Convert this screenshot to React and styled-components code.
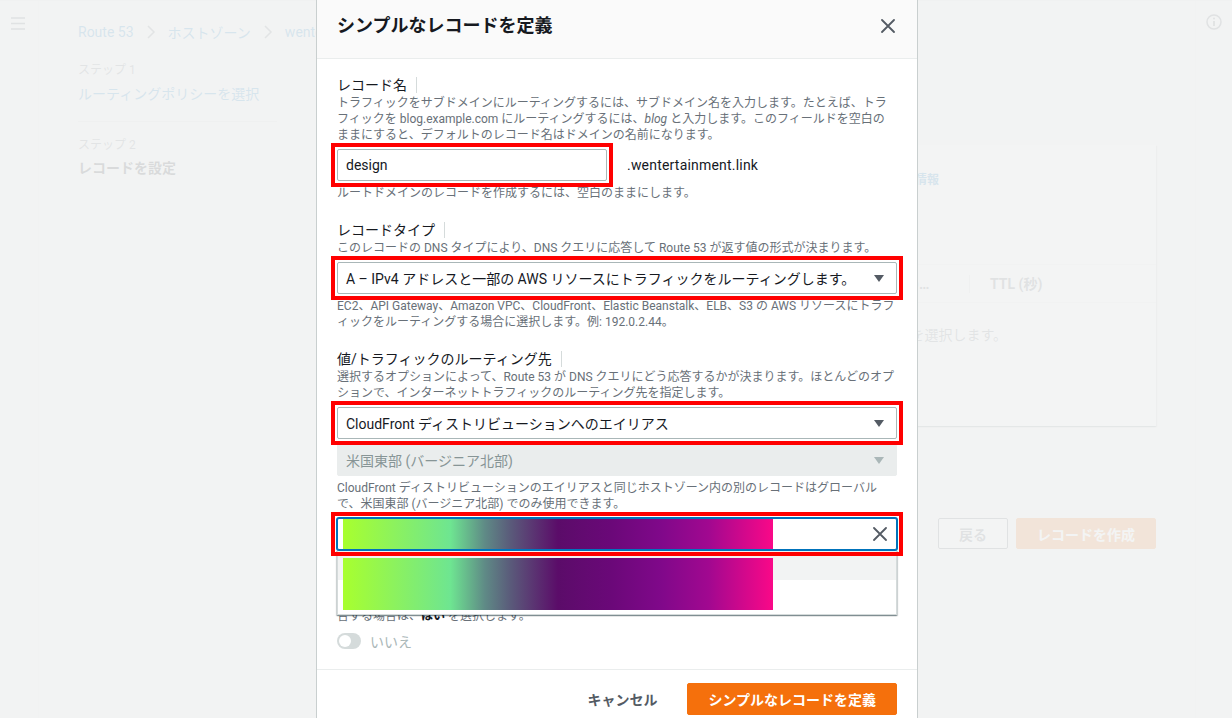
import React from "react";
import styled, { createGlobalStyle } from "styled-components";

const GlobalStyle = createGlobalStyle`
  * { box-sizing: border-box; }
  html, body { margin: 0; padding: 0; }
  body {
    font-family: Roboto, "Noto Sans CJK JP", sans-serif;
    background: #f2f3f3;
    color: #16191f;
    overflow: hidden;
  }
`;

const ORANGE = "#f5700c";

// ---------- background page ----------
const Page = styled.div`
  display: flex;
  height: 718px;
  border-top: 1px solid #e1e4e4;
`;

const SideNav = styled.aside`
  flex: 0 0 39px;
  border-right: 1px solid #e6e9e9;
  padding: 14px 0 0 11px;
`;

const Main = styled.main`
  flex: 1;
  min-width: 0;
  padding: 21px 39px 0 39px;
`;

const Rail = styled.aside`
  flex: 0 0 37px;
  border-left: 1px solid #e6e9e9;
  display: flex;
  justify-content: center;
  padding-top: 13px;
`;

const Crumbs = styled.nav`
  display: flex;
  align-items: center;
  gap: 12px;
  height: 20px;
  font-size: 14px;
  white-space: nowrap;
`;

const Crumb = styled.a`
  color: #0073bb;
  text-decoration: none;
`;

const Layout = styled.div`
  display: grid;
  grid-template-columns: 199px 1fr;
  column-gap: 41px;
  margin-top: 20px;
`;

const StepNo = styled.div`
  font-size: 12px;
  line-height: 16px;
  color: #687078;
`;

const StepLink = styled.a`
  display: block;
  margin-top: 6px;
  font-size: 14px;
  line-height: 20px;
  color: #0073bb;
`;

const StepDivider = styled.hr`
  border: 0;
  border-top: 1px solid #d5dbdb;
  margin: 17px 0 15px;
`;

const StepCurrent = styled.div`
  margin-top: 5px;
  font-size: 14px;
  line-height: 20px;
  font-weight: 700;
`;

const PageTitle = styled.h1`
  margin: 0 0 53px;
  font-size: 24px;
  line-height: 30px;
  font-weight: 700;
`;

const Card = styled.section`
  background: #fff;
  box-shadow: 0 1px 1px 0 rgba(0, 28, 36, 0.3), 1px 1px 1px 0 rgba(0, 28, 36, 0.15),
    -1px 1px 1px 0 rgba(0, 28, 36, 0.15);
`;

const CardHeader = styled.div`
  display: grid;
  grid-template-columns: 567px auto;
  column-gap: 10px;
  align-items: center;
  align-content: start;
  height: 119px;
  padding: 25px 20px 0;
  font-size: 14px;
  line-height: 20px;
`;

const InfoLink = styled.a`
  font-size: 12px;
  font-weight: 700;
  color: #0073bb;
`;

const TableHead = styled.div`
  display: grid;
  grid-template-columns: 200px 110px 341px 1fr;
  align-items: center;
  height: 39px;
  background: #fafafa;
  border-top: 1px solid #eaeded;
  border-bottom: 1px solid #eaeded;
`;

const Th = styled.div`
  padding: 0 ${(p) => p.$pr || 20}px 0 20px;
  line-height: 18px;
  font-size: 14px;
  font-weight: 700;
  color: #545b64;
  white-space: nowrap;
  overflow: hidden;
  text-overflow: ellipsis;
  border-left: ${(p) => (p.$first ? "0" : "1px solid #d5dbdb")};
`;

const Empty = styled.p`
  margin: 0;
  height: 123px;
  padding: 22px 20px 0;
  text-align: center;
  font-size: 14px;
  line-height: 20px;
  color: #687078;
`;

const Actions = styled.div`
  display: flex;
  justify-content: flex-end;
  gap: 8px;
  margin-top: 92px;
`;

const Btn = styled.button`
  height: 31px;
  padding: 0 20px;
  border-radius: 2px;
  font: inherit;
  font-size: 14px;
  font-weight: 700;
  white-space: nowrap;
  cursor: pointer;
  border: 1px solid
    ${(p) => (p.$variant === "primary" ? ORANGE : p.$variant === "link" ? "transparent" : "#545b64")};
  background: ${(p) => (p.$variant === "primary" ? ORANGE : p.$variant === "link" ? "transparent" : "#fff")};
  color: ${(p) => (p.$variant === "primary" ? "#fff" : "#545b64")};
`;

const Overlay = styled.div`
  position: fixed;
  inset: 0;
  background: rgba(242, 243, 243, 0.89);
`;

// ---------- modal ----------
const Modal = styled.div`
  position: fixed;
  top: -8px;
  left: 316px;
  width: 602px;
  background: #fff;
  border: 1px solid #c9cfcf;
`;

const ModalHeader = styled.div`
  display: flex;
  align-items: center;
  justify-content: space-between;
  height: 66px;
  padding: 0 22px 0 20px;
  background: #fafafa;
  border-bottom: 1px solid #eaeded;
`;

const ModalTitle = styled.h2`
  margin: 0;
  font-size: 18px;
  line-height: 22px;
  font-weight: 700;
`;

const IconButton = styled.button`
  display: flex;
  padding: 0;
  border: 0;
  background: none;
  cursor: pointer;
`;

const ModalBody = styled.div`
  padding: 16px 20px 18px;
`;

const Field = styled.div`
  margin-top: ${(p) => p.$mt ?? 19}px;
  &:first-child {
    margin-top: 0;
  }
`;

const LabelRow = styled.div`
  display: flex;
  align-items: center;
  height: 20px;
`;

const Label = styled.span`
  font-size: 14px;
  line-height: 20px;
  color: #16191f;
`;

const InfoSep = styled.span`
  width: 1px;
  height: 16px;
  margin-left: 9px;
  background: #d5dbdb;
`;

const Desc = styled.div`
  font-size: 12px;
  line-height: 16px;
  color: #687078;
  margin-top: ${(p) => p.$mt || 0}px;

  b {
    color: #16191f;
  }
`;

// red annotation frame drawn round a control, taking no room of its own
const Marked = styled.div`
  position: relative;
  z-index: 2;
  border: 4px solid #ff0000;
  padding: 2px;
  margin: ${(p) => (p.$mt ?? 6) - 6}px -6px -6px;
`;

const InputRow = styled.div`
  display: flex;
  align-items: center;
  margin-top: 6px;

  ${Marked} {
    flex: 0 0 282px;
    margin: -6px;
  }
`;

const TextInput = styled.input`
  display: block;
  width: 100%;
  height: 32px;
  padding: 0 8px;
  border: 1px solid #aab7b8;
  border-radius: 2px;
  font: inherit;
  font-size: 14px;
  color: #16191f;
  outline: none;
`;

const Suffix = styled.span`
  margin-left: 20px;
  font-size: 14px;
  letter-spacing: 0.2px;
  color: #16191f;
`;

const Select = styled.div`
  display: flex;
  align-items: center;
  justify-content: space-between;
  height: 32px;
  padding: 0 12px 0 8px;
  border: 1px solid ${(p) => (p.$disabled ? "#eaeded" : "#aab7b8")};
  border-radius: 2px;
  background: ${(p) => (p.$disabled ? "#eaeded" : "#fff")};
  color: ${(p) => (p.$disabled ? "#879596" : "#16191f")};
  font-size: 14px;
  white-space: nowrap;
  margin-top: ${(p) => p.$mt || 0}px;
`;

const AutoField = styled.div`
  position: relative;
  display: flow-root;
  margin-top: 6px;

  ${Marked} {
    margin: -6px;
  }
`;

const AutoInput = styled.div`
  display: flex;
  align-items: center;
  justify-content: space-between;
  height: 32px;
  padding: 0 9px 0 5px;
  border: 1px solid #0073bb;
  box-shadow: 0 0 0 1px #0073bb;
  border-radius: 2px;
  background: #fff;
`;

const Redacted = styled.span`
  display: block;
  width: 430px;
  height: ${(p) => p.$h}px;
  background: linear-gradient(
    90deg,
    #a8ff2e 0%,
    #8cf25e 12%,
    #6ee591 25%,
    #5f8a86 33%,
    #5a5a7a 39%,
    #5b0c69 50%,
    #6a0878 62%,
    #80088a 74%,
    #a10890 85%,
    #fa0888 100%
  );
`;

const Dropdown = styled.div`
  position: absolute;
  top: 100%;
  left: 0;
  right: 0;
  z-index: 1;
  background: #fff;
  border: 1px solid #d5dbdb;
  border-top: 0;
  box-shadow: 0 1px 1px 0 rgba(0, 28, 36, 0.3), 1px 1px 1px 0 rgba(0, 28, 36, 0.15),
    -1px 1px 1px 0 rgba(0, 28, 36, 0.15);

  ${Redacted} {
    position: absolute;
    top: 8px;
    left: 5px;
  }
`;

const Option = styled.div`
  height: ${(p) => (p.$active ? 30 : 34)}px;
  background: ${(p) => (p.$active ? "#f2f3f3" : "#fff")};
`;

const ToggleRow = styled.div`
  display: flex;
  align-items: center;
  gap: 9px;
  margin-top: 7px;
  height: 20px;
`;

const Track = styled.span`
  position: relative;
  width: 24px;
  height: 16px;
  border-radius: 8px;
  background: #d5dbdb;

  &::after {
    content: "";
    position: absolute;
    top: 2px;
    left: 2px;
    width: 12px;
    height: 12px;
    border-radius: 50%;
    background: #fff;
  }
`;

const ToggleLabel = styled.span`
  font-size: 14px;
  color: #aab7b8;
`;

const ModalFooter = styled.div`
  display: flex;
  justify-content: flex-end;
  gap: 9px;
  padding: 13px 20px 20px;
  border-top: 1px solid #eaeded;

  ${Btn} {
    height: 32px;
  }
`;

// ---------- icons ----------
const Chevron = () => (
  <svg width="10" height="16" viewBox="0 0 10 16">
    <path d="M2 2 L8 8 L2 14" fill="none" stroke="#687078" strokeWidth="1.5" />
  </svg>
);

const Caret = ({ color = "#545b64" }) => (
  <svg width="10" height="7" viewBox="0 0 10 7">
    <path d="M0 0 H10 L5 7 Z" fill={color} />
  </svg>
);

const Cross = () => (
  <svg width="14" height="14" viewBox="0 0 14 14">
    <path d="M1 1 L13 13 M13 1 L1 13" stroke="#545b64" strokeWidth="1.8" strokeLinecap="round" />
  </svg>
);

const Hamburger = () => (
  <svg width="14" height="13" viewBox="0 0 14 13">
    <path d="M0 1 H14 M0 6.5 H14 M0 12 H14" stroke="#545b64" strokeWidth="1.6" />
  </svg>
);

const InfoIcon = () => (
  <svg width="16" height="16" viewBox="0 0 16 16">
    <circle cx="8" cy="8" r="7" fill="none" stroke="#545b64" strokeWidth="1.5" />
    <path d="M8 7 V12" stroke="#545b64" strokeWidth="1.8" />
    <circle cx="8" cy="4.6" r="1" fill="#545b64" />
  </svg>
);

const App = () => {
  return (
    <>
      <GlobalStyle />
      <Page>
        <SideNav>
          <Hamburger />
        </SideNav>
        <Main>
          <Crumbs>
            <Crumb>Route 53</Crumb>
            <Chevron />
            <Crumb>ホストゾーン</Crumb>
            <Chevron />
            <Crumb>wentertainment.link</Crumb>
          </Crumbs>
          <Layout>
            <div>
              <StepNo>ステップ 1</StepNo>
              <StepLink>ルーティングポリシーを選択</StepLink>
              <StepDivider />
              <StepNo>ステップ 2</StepNo>
              <StepCurrent>レコードを設定</StepCurrent>
            </div>
            <div>
              <PageTitle>レコードを設定</PageTitle>
              <Card>
                <CardHeader>
                  <span>シンプルなルーティングで設定するレコード (0)</span>
                  <InfoLink>情報</InfoLink>
                </CardHeader>
                <TableHead>
                  <Th $first>レコード名</Th>
                  <Th>タイプ</Th>
                  <Th $pr={34}>値/トラフィックのルーティング先の詳細の設定の内容</Th>
                  <Th>TTL (秒)</Th>
                </TableHead>
                <Empty>ルーティングのレコードを定義するには、[シンプルなレコードを定義] を選択します。</Empty>
              </Card>
              <Actions>
                <Btn $variant="link">キャンセル</Btn>
                <Btn>戻る</Btn>
                <Btn $variant="primary">レコードを作成</Btn>
              </Actions>
            </div>
          </Layout>
        </Main>
        <Rail>
          <InfoIcon />
        </Rail>
      </Page>

      <Overlay />

      <Modal>
        <ModalHeader>
          <ModalTitle>シンプルなレコードを定義</ModalTitle>
          <IconButton>
            <Cross />
          </IconButton>
        </ModalHeader>

        <ModalBody>
          <Field>
            <LabelRow>
              <Label>レコード名</Label>
              <InfoSep />
            </LabelRow>
            <Desc>
              トラフィックをサブドメインにルーティングするには、サブドメイン名を入力します。たとえば、トラフィックを
              blog.example.com にルーティングするには、<i>blog</i>{" "}
              と入力します。このフィールドを空白の
              <br />
              ままにすると、デフォルトのレコード名はドメインの名前になります。
            </Desc>
            <InputRow>
              <Marked>
                <TextInput value="design" readOnly />
              </Marked>
              <Suffix>.wentertainment.link</Suffix>
            </InputRow>
            <Desc $mt={4}>ルートドメインのレコードを作成するには、空白のままにします。</Desc>
          </Field>

          <Field>
            <LabelRow>
              <Label>レコードタイプ</Label>
              <InfoSep />
            </LabelRow>
            <Desc>このレコードの DNS タイプにより、DNS クエリに応答して Route 53 が返す値の形式が決まります。</Desc>
            <Marked>
              <Select>
                A – IPv4 アドレスと一部の AWS リソースにトラフィックをルーティングします。
                <Caret />
              </Select>
            </Marked>
            <Desc $mt={4}>
              EC2、API Gateway、Amazon VPC、CloudFront、Elastic Beanstalk、ELB、S3 の AWS
              リソースにトラフィックをルーティングする場合に選択します。例: 192.0.2.44。
            </Desc>
          </Field>

          <Field>
            <LabelRow>
              <Label>値/トラフィックのルーティング先</Label>
              <InfoSep />
            </LabelRow>
            <Desc>
              選択するオプションによって、Route 53 が DNS
              クエリにどう応答するかが決まります。ほとんどのオプションで、インターネットトラフィックのルーティング先を指定します。
            </Desc>
            <Marked>
              <Select>
                CloudFront ディストリビューションへのエイリアス
                <Caret />
              </Select>
            </Marked>
            <Select $disabled $mt={5}>
              米国東部 (バージニア北部)
              <Caret color="#aab7b8" />
            </Select>
            <Desc $mt={4}>
              CloudFront
              ディストリビューションのエイリアスと同じホストゾーン内の別のレコードはグローバルで、米国東部 (バージニア北部)
              でのみ使用できます。
            </Desc>
            <AutoField>
              <Marked>
                <AutoInput>
                  <Redacted $h={30} />
                  <Cross />
                </AutoInput>
              </Marked>
              <Dropdown>
                <Option $active />
                <Option />
                <Redacted $h={52} />
              </Dropdown>
            </AutoField>
          </Field>

          <Field $mt={22}>
            <LabelRow>
              <Label>ターゲットのヘルスを評価</Label>
              <InfoSep />
            </LabelRow>
            <Desc>
              ターゲットのヘルスチェックの結果に基づいてルーティングする要件に適
              <br />
              合する場合は、<b>はい</b> を選択します。
            </Desc>
            <ToggleRow>
              <Track />
              <ToggleLabel>いいえ</ToggleLabel>
            </ToggleRow>
          </Field>
        </ModalBody>

        <ModalFooter>
          <Btn $variant="link">キャンセル</Btn>
          <Btn $variant="primary">シンプルなレコードを定義</Btn>
        </ModalFooter>
      </Modal>
    </>
  );
};

export default App;
